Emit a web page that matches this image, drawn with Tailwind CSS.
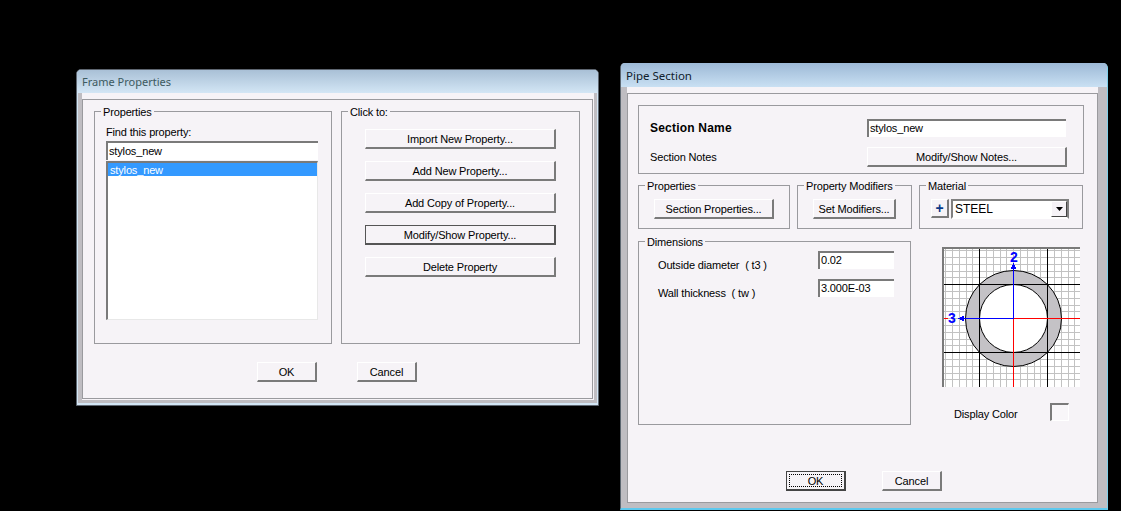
<!DOCTYPE html>
<html><head><meta charset="utf-8">
<script src="https://cdn.jsdelivr.net/npm/@tailwindcss/browser@4"></script>
</head>
<body class="bg-black">
<div class="relative w-[1121px] h-[511px] overflow-hidden bg-black font-['Liberation_Sans',sans-serif] text-[11px] tracking-[-0.15px] leading-[14px] text-black whitespace-nowrap">

<!-- Frame Properties -->
<section class="absolute left-[76px] top-[69px] w-[523px] h-[337px] flex flex-col rounded-t-[5px] border border-[#5e6670] bg-[#d3e6f5]">
  <div class="h-[23px] shrink-0 rounded-t-[4px] bg-gradient-to-b from-[#a9c0d6] to-[#d3e6f5] pl-[5px] pt-[5px] font-['Noto_Sans',sans-serif] text-[11px] tracking-normal text-[#3d5a60]">Frame Properties</div>
  <div class="flex-1 ml-[1px] mr-[1px] mb-[2px] pl-[4px] pr-[3px] pb-[3px] bg-[#bfbdc2] flex flex-col">
    <div class="flex-1 bg-[#f6f3f7] pt-[6px] pr-[1px] pb-[1px] flex flex-col">
      <div class="flex-1 border border-[#9a9a9e] px-[11px] pt-[11px] flex flex-col">
        <div class="flex gap-[9px]">
          <div class="relative w-[238px] h-[233px] border border-[#9a9a9e] pl-[11px] pr-[13px] pt-[13px]">
            <span class="absolute left-[6px] -top-[7px] bg-[#f6f3f7] px-[2px]">Properties</span>
            <div class="h-[15px]">Find this property:</div>
            <div class="h-[19px] border-t-2 border-l-2 border-[#7a7a7a] bg-white pl-[1px] pt-[1px] mt-[1px]">stylos_new</div>
            <div class="mt-[1px] h-[159px] border-t-2 border-l-2 border-[#7a7a7a] bg-white border-r border-r-[#e8e8e8] border-b border-b-[#e8e8e8]">
              <div class="h-[13px] bg-[#3399ff] pl-[2px] text-white">stylos_new</div>
            </div>
          </div>
          <div class="relative w-[239px] h-[233px] border border-[#9a9a9e] pl-[23px] pt-[17px] flex flex-col gap-[12px]">
            <span class="absolute left-[6px] -top-[7px] bg-[#f6f3f7] px-[2px]">Click to:</span>
            <div class="w-[191px] h-[20px] flex items-center justify-center bg-[#f6f3f7] border-t border-l border-t-white border-l-white border-r-2 border-b-2 border-r-[#7a7a7a] border-b-[#7a7a7a]">Import New Property...</div>
            <div class="w-[191px] h-[20px] flex items-center justify-center bg-[#f6f3f7] border-t border-l border-t-white border-l-white border-r-2 border-b-2 border-r-[#7a7a7a] border-b-[#7a7a7a]">Add New Property...</div>
            <div class="w-[191px] h-[20px] flex items-center justify-center bg-[#f6f3f7] border-t border-l border-t-white border-l-white border-r-2 border-b-2 border-r-[#7a7a7a] border-b-[#7a7a7a]">Add Copy of Property...</div>
            <div class="w-[191px] h-[20px] flex items-center justify-center bg-[#f6f3f7] border border-[#555] border-r-2 border-b-2">Modify/Show Property...</div>
            <div class="w-[191px] h-[20px] flex items-center justify-center bg-[#f6f3f7] border-t border-l border-t-white border-l-white border-r-2 border-b-2 border-r-[#7a7a7a] border-b-[#7a7a7a]">Delete Property</div>
          </div>
        </div>
        <div class="flex gap-[40px] pl-[163px] pt-[18px]">
          <div class="w-[60px] h-[20px] flex items-center justify-center bg-[#f6f3f7] border-t border-l border-t-white border-l-white border-r-2 border-b-2 border-r-[#7a7a7a] border-b-[#7a7a7a]">OK</div>
          <div class="w-[60px] h-[20px] flex items-center justify-center bg-[#f6f3f7] border-t border-l border-t-white border-l-white border-r-2 border-b-2 border-r-[#7a7a7a] border-b-[#7a7a7a]">Cancel</div>
        </div>
      </div>
    </div>
  </div>
</section>

<!-- Pipe Section -->
<section class="absolute left-[620px] top-[63px] w-[488px] h-[447px] flex flex-col rounded-t-[5px] border-r border-b-2 border-l border-l-[#5c6670] border-r-[#7fd0ea] border-b-[#5cc8ee] bg-[#bfbdc2]">
  <div class="h-[24px] shrink-0 rounded-t-[4px] bg-gradient-to-b from-[#9db9d6] to-[#c9e0f3] pl-[5px] pt-[6px] font-['Noto_Sans',sans-serif] text-[11.5px] tracking-normal text-[#10202c]">Pipe Section</div>
  <div class="flex-1 ml-[6px] mr-[9px] mb-[5px] bg-[#f6f3f7] pt-[6px] flex flex-col">
    <div class="flex-1 border border-[#9a9a9e] px-[10px] pt-[11px] flex flex-col">
      <div class="w-[446px] h-[69px] border border-[#9a9a9e] pl-[11px] pr-[16px] pt-[13px] flex flex-col gap-[10px]">
        <div class="flex items-center justify-between">
          <span class="text-[12px] font-bold tracking-[0.2px]">Section Name</span>
          <div class="w-[199px] h-[18px] mr-[1px] border-t-2 border-l-2 border-[#7a7a7a] bg-white pl-[1px]">stylos_new</div>
        </div>
        <div class="flex items-center justify-between">
          <span>Section Notes</span>
          <div class="w-[200px] h-[20px] flex items-center justify-center bg-[#f6f3f7] border-t border-l border-t-white border-l-white border-r-2 border-b-2 border-r-[#7a7a7a] border-b-[#7a7a7a]">Modify/Show Notes...</div>
        </div>
      </div>
      <div class="flex gap-[7px] mt-[11px]">
        <div class="relative w-[152px] h-[44px] border border-[#9a9a9e] pl-[15px] pt-[13px]">
          <span class="absolute left-[6px] -top-[7px] bg-[#f6f3f7] px-[2px]">Properties</span>
          <div class="w-[120px] h-[20px] flex items-center justify-center bg-[#f6f3f7] border-t border-l border-t-white border-l-white border-r-2 border-b-2 border-r-[#7a7a7a] border-b-[#7a7a7a]">Section Properties...</div>
        </div>
        <div class="relative w-[115px] h-[44px] border border-[#9a9a9e] pl-[15px] pt-[13px]">
          <span class="absolute left-[6px] -top-[7px] bg-[#f6f3f7] px-[2px]">Property Modifiers</span>
          <div class="w-[83px] h-[20px] flex items-center justify-center bg-[#f6f3f7] border-t border-l border-t-white border-l-white border-r-2 border-b-2 border-r-[#7a7a7a] border-b-[#7a7a7a]">Set Modifiers...</div>
        </div>
        <div class="relative w-[164px] h-[44px] border border-[#9a9a9e] pl-[11px] pt-[13px] flex gap-[2px]">
          <span class="absolute left-[6px] -top-[7px] bg-[#f6f3f7] px-[2px]">Material</span>
          <div class="w-[18px] h-[19px] flex items-center justify-center bg-[#f6f3f7] border-t border-l border-t-white border-l-white border-r-2 border-b-2 border-r-[#7a7a7a] border-b-[#7a7a7a] font-bold text-[14px] text-[#0a3a8a]">+</div>
          <div class="w-[118px] h-[20px] flex items-center justify-between border-2 border-[#808080] border-b-white bg-white pl-[2px]">
            <span class="text-[12px] tracking-normal">STEEL</span>
            <div class="w-[16px] h-[16px] flex items-center justify-center bg-[#f6f3f7] border-t border-l border-t-white border-l-white border-r border-b border-r-[#444] border-b-[#444]">
              <svg width="7" height="4" viewBox="0 0 7 4"><path d="M0 0h7L3.5 4z" fill="#000"/></svg>
            </div>
          </div>
        </div>
      </div>
      <div class="flex mt-[12px]">
        <div class="relative w-[273px] h-[184px] border border-[#9a9a9e] pl-[19px] pt-[9px] flex flex-col gap-[10px]">
          <span class="absolute left-[6px] -top-[7px] bg-[#f6f3f7] px-[2px]">Dimensions</span>
          <div class="h-[18px] flex items-start justify-between pr-[16px]">
            <span class="mt-[7px]">Outside diameter&nbsp; ( t3 )</span>
            <div class="w-[76px] h-[18px] border-t-2 border-l-2 border-[#7a7a7a] bg-white pl-[1px]">0.02</div>
          </div>
          <div class="h-[18px] flex items-start justify-between pr-[16px]">
            <span class="mt-[7px]">Wall thickness&nbsp; ( tw )</span>
            <div class="w-[76px] h-[18px] border-t-2 border-l-2 border-[#7a7a7a] bg-white pl-[1px]">3.000E-03</div>
          </div>
        </div>
        <div class="ml-[31px] pt-[6px] flex flex-col">
          <svg width="138" height="140" viewBox="0 0 138 140" shape-rendering="crispEdges">
            <rect width="138" height="140" fill="#fff"/>
            <g stroke="#c2c2c2" stroke-width="1">
              <path d="M3.5 0V140M10.5 0V140M17.5 0V140M24.5 0V140M30.5 0V140M37.5 0V140M44.5 0V140M51.5 0V140M58.5 0V140M64.5 0V140M71.5 0V140M78.5 0V140M85.5 0V140M92.5 0V140M98.5 0V140M105.5 0V140M112.5 0V140M119.5 0V140M126.5 0V140M132.5 0V140"/>
              <path d="M0 3.5H138M0 10.5H138M0 17.5H138M0 24.5H138M0 30.5H138M0 37.5H138M0 44.5H138M0 51.5H138M0 58.5H138M0 64.5H138M0 71.5H138M0 78.5H138M0 85.5H138M0 92.5H138M0 98.5H138M0 105.5H138M0 112.5H138M0 119.5H138M0 126.5H138M0 132.5H138"/>
            </g>
            <circle cx="71.5" cy="71.5" r="48" fill="#c4c2c6" stroke="#000" shape-rendering="auto"/>
            <circle cx="71.5" cy="71.5" r="34" fill="#fff" stroke="#000" shape-rendering="auto"/>
            <g stroke="#000"><path d="M37.5 2V140M105.5 2V140M2 37.5H138M2 105.5H138"/></g>
            <g stroke="#ff0000"><path d="M71.5 71V140M72 71.5H138M2 71.5H6"/></g>
            <g stroke="#0000ff"><path d="M71.5 72V20M72 71.5H20"/></g>
            <path d="M71.5 16l3 6h-6zM16 71.5l6-3v6z" fill="#0000ff"/>
            <text x="68" y="15" font-family="Liberation Sans" font-size="14" font-weight="700" fill="#0000ff">2</text>
            <text x="6" y="76" font-family="Liberation Sans" font-size="14" font-weight="700" fill="#0000ff">3</text>
            <path d="M1 140V1H138" fill="none" stroke="#7a7a7a" stroke-width="2"/>
          </svg>
          <div class="flex items-start justify-between pl-[12px] pr-[11px] mt-[16px]">
            <span class="mt-[4px]">Display Color</span>
            <div class="w-[19px] h-[18px] border-t-2 border-l-2 border-[#7a7a7a] bg-[#f8f6f9] border-r border-r-white border-b border-b-white"></div>
          </div>
        </div>
      </div>
      <div class="flex gap-[36px] pl-[148px] pt-[46px]">
        <div class="w-[60px] h-[20px] p-[2px] bg-[#f6f3f7] border border-[#444] border-r-2 border-b-2"><div class="h-full flex items-center justify-center border border-dotted border-black">OK</div></div>
        <div class="w-[60px] h-[20px] flex items-center justify-center bg-[#f6f3f7] border-t border-l border-t-white border-l-white border-r-2 border-b-2 border-r-[#7a7a7a] border-b-[#7a7a7a]">Cancel</div>
      </div>
    </div>
  </div>
</section>
</div>
</body></html>
